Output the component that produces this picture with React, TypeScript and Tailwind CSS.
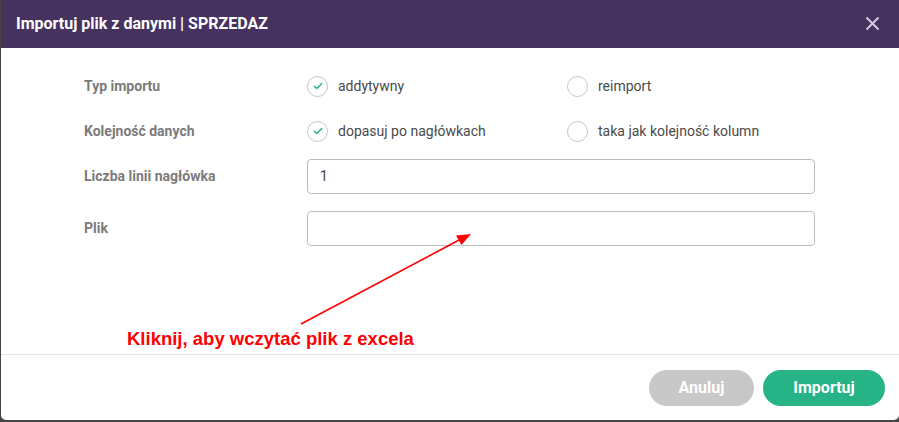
import React from "react";

interface RadioProps {
  label: string;
  checked?: boolean;
}

function Radio({ label, checked }: RadioProps) {
  return (
    <div className="flex items-center gap-[10px]">
      <span className="flex h-[21px] w-[21px] items-center justify-center rounded-full border border-[#c4c4c4] bg-white">
        {checked && (
          <svg width="10" height="8" viewBox="0 0 10 8" fill="none">
            <path
              d="M1.2 4.2 L3.8 6.6 L8.8 1.4"
              stroke="#26b386"
              strokeWidth="1.4"
              strokeLinecap="round"
              strokeLinejoin="round"
            />
          </svg>
        )}
      </span>
      <span className="text-[14px] text-[#4a4a4a]">{label}</span>
    </div>
  );
}

function Label({ children }: { children: React.ReactNode }) {
  return (
    <div className="w-[223px] shrink-0 text-[14px] font-bold text-[#7b7b7b]">
      {children}
    </div>
  );
}

export default function App() {
  return (
    <div
      className="h-[422px] w-[899px] bg-[#454545] pb-[2px] pl-[1px]"
      style={{ fontFamily: "Roboto, 'Noto Sans', sans-serif" }}
    >
      <div className="relative flex h-[420px] w-[898px] flex-col overflow-hidden rounded-b-[5px] bg-white">
        {/* header */}
        <div className="flex h-[48px] shrink-0 items-center justify-between bg-[#46325f] pl-[15px] pr-[19px]">
          <h1 className="text-[16px] font-bold text-white">
            Importuj plik z danymi | SPRZEDAZ
          </h1>
          <svg width="15" height="15" viewBox="0 0 15 15" className="mt-[-2px]">
            <path
              d="M1.5 1.5 L13.5 13.5 M13.5 1.5 L1.5 13.5"
              stroke="#d3cbdd"
              strokeWidth="2"
            />
          </svg>
        </div>

        {/* body */}
        <div className="h-[306px] shrink-0 pl-[83px] pt-[28px]">
          <div className="flex h-[20px] items-center">
            <Label>Typ importu</Label>
            <div className="w-[260px]">
              <Radio label="addytywny" checked />
            </div>
            <Radio label="reimport" />
          </div>

          <div className="mt-[25px] flex h-[20px] items-center">
            <Label>Kolejność danych</Label>
            <div className="w-[260px]">
              <Radio label="dopasuj po nagłówkach" checked />
            </div>
            <Radio label="taka jak kolejność kolumn" />
          </div>

          <div className="mt-[18px] flex h-[35px] items-center">
            <Label>Liczba linii nagłówka</Label>
            <div className="flex h-[35px] w-[508px] items-center rounded-[4px] border border-[#bdbdbd] px-[12px] text-[14px] text-[#444]">
              1
            </div>
          </div>

          <div className="mt-[17px] flex h-[35px] items-center">
            <Label>Plik</Label>
            <div className="h-[35px] w-[508px] rounded-[4px] border border-[#bdbdbd]" />
          </div>
        </div>

        {/* annotation */}
        <svg
          className="pointer-events-none absolute left-0 top-0"
          width="898"
          height="420"
        >
          <line x1="300" y1="324" x2="460" y2="239" stroke="#ff0000" strokeWidth="1.6" />
          <polygon points="470,234 455,235.5 460.5,245" fill="#ff0000" />
        </svg>
        <div
          className="absolute left-[126px] top-[327px] text-[18.5px] font-bold leading-[24px] text-[#ff0000]"
          style={{ fontFamily: "'Liberation Sans', Arial, sans-serif" }}
        >
          Kliknij, aby wczytać plik z excela
        </div>

        {/* footer */}
        <div className="flex flex-1 items-start justify-end gap-[9px] border-t border-[#e3e3e3] pr-[14px] pt-[15px]">
          <button className="h-[36px] w-[105px] rounded-full bg-[#c8c8c8] text-[16px] font-bold text-white">
            Anuluj
          </button>
          <button className="h-[36px] w-[122px] rounded-full bg-[#26b386] text-[16px] font-bold text-white">
            Importuj
          </button>
        </div>
      </div>
    </div>
  );
}
